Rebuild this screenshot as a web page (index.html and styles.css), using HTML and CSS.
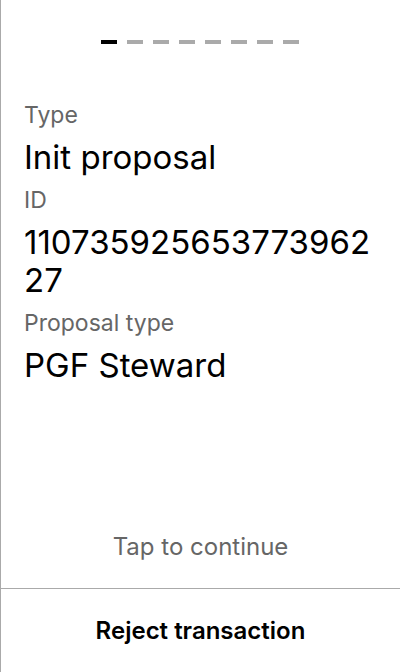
FILE: index.html
```html
<!DOCTYPE html>
<html>
<head>
<meta charset="utf-8">
<link rel="stylesheet" href="styles.css">
</head>
<body>
<div class="screen">
  <div class="main">
    <div class="pager">
      <span class="dash active"></span>
      <span class="dash"></span>
      <span class="dash"></span>
      <span class="dash"></span>
      <span class="dash"></span>
      <span class="dash"></span>
      <span class="dash"></span>
      <span class="dash"></span>
    </div>
    <div class="fields">
      <div class="label">Type</div>
      <div class="value">Init proposal</div>
      <div class="label">ID</div>
      <div class="value">11073592565377396227</div>
      <div class="label">Proposal type</div>
      <div class="value">PGF Steward</div>
    </div>
    <div class="tap">Tap to continue</div>
  </div>
  <div class="reject">Reject transaction</div>
</div>
</body>
</html>
```
FILE: styles.css
```css
html, body {
  margin: 0;
  padding: 0;
  background: #fff;
}
body {
  font-family: Inter, "Noto Sans", sans-serif;
  color: #000;
}
.screen {
  width: 400px;
  height: 672px;
  box-sizing: border-box;
  border-left: 1px solid #aaaaaa;
  display: flex;
  flex-direction: column;
}
.main {
  flex: 1;
  display: flex;
  flex-direction: column;
  border-bottom: 1px solid #aaaaaa;
}
.pager {
  display: flex;
  justify-content: center;
  gap: 10px;
  padding-top: 40px;
  padding-right: 1px;
}
.dash {
  width: 16px;
  height: 4px;
  background: #aaaaaa;
}
.dash.active {
  background: #000;
}
.fields {
  padding: 56px 23px 0 23px;
  display: flex;
  flex-direction: column;
}
.label {
  font-size: 23px;
  line-height: 30px;
  color: #666666;
  margin-bottom: 8px;
}
.value {
  font-size: 33px;
  line-height: 38px;
  margin-bottom: 9px;
  word-break: break-all;
}
.tap {
  margin-top: auto;
  text-align: center;
  font-size: 24px;
  line-height: 28px;
  color: #666666;
  padding-bottom: 27px;
}
.reject {
  height: 83px;
  display: flex;
  align-items: center;
  justify-content: center;
  font-size: 24px;
  font-weight: 600;
}
```
